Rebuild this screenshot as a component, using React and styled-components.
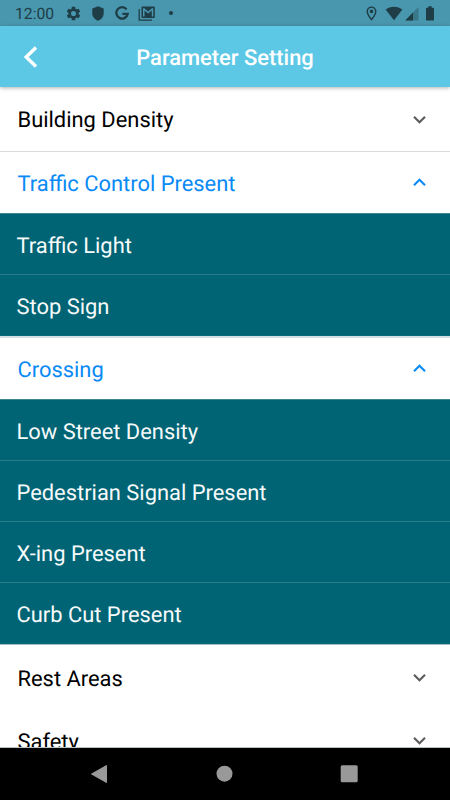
import React from 'react'
import styled, { createGlobalStyle } from 'styled-components';

const SECTIONS = [
    { title: 'Building Density', height: 65, line: '#dcdcdc' },
    {
        title: 'Traffic Control Present',
        height: 61,
        open: true,
        edge: 2,
        items: ['Traffic Light', 'Stop Sign'],
    },
    {
        title: 'Crossing',
        height: 61,
        open: true,
        edge: 1,
        items: ['Low Street Density', 'Pedestrian Signal Present', 'X-ing Present', 'Curb Cut Present'],
    },
    { title: 'Rest Areas', height: 65 },
    { title: 'Safety', height: 61 },
]

function StatusBar() {
    return (
        <Status>
            <Clock>12:00</Clock>
            <StatusIcon $w={17} $gap={11} viewBox="0 0 24 24">
                <path d="M19.14 12.94c.04-.3.06-.61.06-.94 0-.32-.02-.64-.07-.94l2.03-1.58a.49.49 0 0 0 .12-.61l-1.92-3.32a.488.488 0 0 0-.59-.22l-2.39.96c-.5-.38-1.03-.7-1.62-.94l-.36-2.54a.484.484 0 0 0-.48-.41h-3.84c-.24 0-.43.17-.47.41l-.36 2.54c-.59.24-1.13.57-1.62.94l-2.39-.96c-.22-.08-.47 0-.59.22L2.74 8.870c-.12.21-.08.47.12.61l2.03 1.580c-.05.3-.09.63-.09.94s.02.64.07.94l-2.030 1.580a.49.49 0 0 0-.12.61l1.920 3.320c.12.22.37.29.59.22l2.390-.96c.5.38 1.030.7 1.620.94l.36 2.540c.05.24.24.41.48.41h3.840c.24 0 .44-.17.47-.41l.36-2.540c.59-.24 1.130-.56 1.620-.94l2.390.96c.22.08.47 0 .59-.22l1.920-3.320c.12-.22.07-.47-.12-.61l-2.010-1.580zM12 15.600A3.610 3.610 0 0 1 8.400 12 3.610 3.610 0 0 1 12 8.400a3.610 3.610 0 0 1 3.600 3.600 3.610 3.610 0 0 1-3.600 3.600z" />
            </StatusIcon>
            <StatusIcon $w={12} $gap={10} viewBox="0 0 12 17">
                <path d="M6 1.300.3 3.500v4.800c0 3.500 2.300 6.200 5.700 7.400 3.400-1.200 5.700-3.900 5.700-7.400V3.500z" />
            </StatusIcon>
            <StatusIcon $w={14} $gap={11} viewBox="0 0 14 17">
                <path d="M11.600 4.400A5.700 5.700 0 1 0 12.700 8.800H7.400" fill="none" stroke="#1e3d46" strokeWidth="2.300" />
            </StatusIcon>
            <StatusIcon $w={17} $gap={9} viewBox="0 0 17 17">
                <path d="M1.200 4V15.200H14" fill="none" stroke="#1e3d46" strokeWidth="1.300" />
                <path fillRule="evenodd" d="M4.300 1.500h11.700q.8 0 .8.8v10q0 .8-.8.8H4.300q-.8 0-.8-.8v-10q0-.8.8-.8zM5 3.200v8.300h1.500V5.400l3.600 3.100 3.700-3.100v6.100h1.500V3.200h-1.300l-3.900 3.300-3.800-3.300z" />
            </StatusIcon>
            <Dot />
            <Spacer />
            <StatusIcon $w={17} $gap={0} viewBox="0 0 24 24">
                <path d="M12 2C8.130 2 5 5.130 5 9c0 5.250 7 13 7 13s7-7.750 7-13c0-3.870-3.130-7-7-7zM7 9c0-2.760 2.240-5 5-5s5 2.240 5 5c0 2.880-2.880 7.190-5 9.880C9.920 16.210 7 11.850 7 9z" />
                <circle cx="12" cy="9" r="2.500" />
            </StatusIcon>
            <StatusIcon $w={18} $gap={5} viewBox="0 0 18 17">
                <path d="M9 15.200.6 4.600C2.900 2.700 5.700 1.700 9 1.700s6.100 1 8.400 2.900z" />
            </StatusIcon>
            <StatusIcon $w={14} $gap={2} viewBox="0 0 14 17">
                <path d="M13.500 2v13.500H.2z" opacity=".35" />
                <path d="M8 7.600v7.900H.2z" />
            </StatusIcon>
            <StatusIcon $w={10} $gap={6} viewBox="0 0 10 17">
                <path d="M3.300 1.300h3.400v1.400H8q1 0 1 1v11q0 .9-1 .9H2q-1 0-1-.9v-11q0-1 1-1h1.300z" />
            </StatusIcon>
        </Status>
    )
}

function Section({ title, items = [], open, height, line, edge }) {
    return (
        <>
            <SectionHeader $open={open} $height={height} $line={line}>
                <SectionTitle>{title}</SectionTitle>
                <Arrow $open={open} viewBox="0 0 24 24">
                    <path d="M16.590 8.590 12 13.170 7.410 8.590 6 10l6 6 6-6z" />
                </Arrow>
            </SectionHeader>
            {open && (
                <ItemList $edge={edge}>
                    {items.map((item) => (
                        <Item key={item}>{item}</Item>
                    ))}
                </ItemList>
            )}
        </>
    )
}

function App() {
    return (
        <Screen>
            <GlobalStyle />
            <StatusBar />
            <Header>
                <BackButton aria-label="Back">
                    <svg width="16" height="22" viewBox="0 0 16 22">
                        <path d="M13 1.500 3.200 11l9.800 9.500" fill="none" stroke="#fff" strokeWidth="3.400" />
                    </svg>
                </BackButton>
                <HeaderTitle>Parameter Setting</HeaderTitle>
            </Header>
            <Content>
                {SECTIONS.map((section) => (
                    <Section key={section.title} {...section} />
                ))}
            </Content>
            <NavBar>
                <svg width="18" height="20" viewBox="0 0 18 20">
                    <path d="M16.500 1.500v17L1.500 10z" stroke="#999" strokeLinejoin="round" />
                </svg>
                <svg width="18" height="20" viewBox="0 0 18 20">
                    <circle cx="9.500" cy="9.700" r="8" />
                </svg>
                <svg width="18" height="20" viewBox="0 0 18 20">
                    <rect x=".7" y="1.200" width="17" height="17" rx="1.500" />
                </svg>
            </NavBar>
        </Screen>
    )
}

export default App

const GlobalStyle = createGlobalStyle`
body {
    margin: 0;
    background: #fff;
}
`

const Screen = styled.div`
display: flex;
flex-direction: column;
width: 450px;
height: 800px;
overflow: hidden;
background: #fff;
font-family: Roboto, sans-serif;
text-rendering: geometricPrecision;
`

const Status = styled.div`
display: flex;
align-items: center;
flex: none;
box-sizing: border-box;
height: 26px;
padding: 0 15px;
background: #4997ae;
color: #1e3d46;
`

const Clock = styled.span`
width: 39px;
padding-top: 2px;
font-size: 15.7px;
line-height: 24px;
`

const StatusIcon = styled.svg`
flex: none;
width: ${(props) => props.$w}px;
height: 17px;
margin-left: ${(props) => props.$gap}px;
fill: #1e3d46;
`

const Dot = styled.span`
width: 4px;
height: 4px;
margin-left: 14px;
border-radius: 50%;
background: #1e3d46;
`

const Spacer = styled.div`
flex: 1;
`

const Header = styled.header`
display: grid;
grid-template-columns: 60px 1fr 60px;
align-items: center;
flex: none;
height: 61px;
background: #5cc8e6;
box-shadow: 0 1px 4px rgba(0, 0, 0, 0.3);
z-index: 1;
`

const BackButton = styled.button`
display: flex;
margin: 0;
padding: 0 0 0 23px;
border: 0;
background: none;
`

const HeaderTitle = styled.h1`
margin: 4px 0 0;
color: #fff;
font-size: 21.9px;
font-weight: 500;
line-height: 26px;
text-align: center;
white-space: nowrap;
`

const Content = styled.main`
flex: 1;
min-height: 0;
overflow: hidden;
`

const SectionHeader = styled.div`
display: flex;
align-items: center;
justify-content: space-between;
box-sizing: border-box;
height: ${(props) => props.$height}px;
padding: 0 18px 0 17.500px;
border-bottom: 1px solid ${(props) => props.$line || 'transparent'};
color: ${(props) => (props.$open ? '#0a8af5' : '#000')};
`

const SectionTitle = styled.span`
padding-top: 4px;
font-size: 21.9px;
line-height: 26px;

${() => SectionHeader}:not(:first-child) & {
    padding-top: 5px;
}
`

const Arrow = styled.svg`
width: 25px;
height: 25px;
fill: ${(props) => (props.$open ? '#0a8af5' : '#5c5c5c')};
transform: ${(props) => (props.$open ? 'rotate(180deg)' : 'none')};
`

const ItemList = styled.div`
background: #006475;
border-top: 1px solid #3c8793;
border-bottom: ${(props) => props.$edge}px solid ${(props) => (props.$edge > 1 ? '#d0dfe3' : '#9fbcc2')};
`

const Item = styled.div`
display: flex;
align-items: center;
box-sizing: border-box;
height: 61px;
padding: 4px 16.500px 0;
border-bottom: 1px solid #297b8a;
color: #f6fafa;
font-size: 21.9px;

&:last-child {
    border-bottom-color: #0b6a7a;
}
`

const NavBar = styled.nav`
display: flex;
justify-content: center;
align-items: center;
gap: 107px;
flex: none;
box-sizing: border-box;
height: 53px;
padding: 0 2px 1px 0;
border-top: 1px solid #b5c4c4;
background: #000;
fill: #999;
`
